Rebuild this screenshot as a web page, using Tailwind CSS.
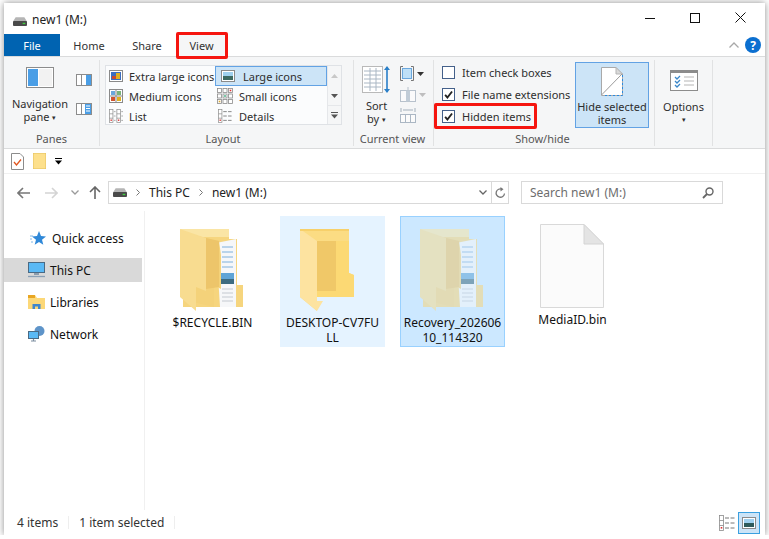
<!DOCTYPE html>
<html><head><meta charset="utf-8">
<script src="https://cdn.jsdelivr.net/npm/@tailwindcss/browser@4"></script>
</head>
<body class="bg-white overflow-hidden font-['Noto_Sans','Open_Sans',sans-serif] text-[11px] leading-[13px] text-[#2b2b2b]">
<svg width="0" height="0" class="absolute">
<defs>
<symbol id="drive" viewBox="0 0 16 10"><path d="M3 0h10l3 5H0z" fill="#b5b5b5"/><rect x="0" y="4.5" width="16" height="5.5" rx="1" fill="#4a4a4a"/><rect x="11" y="6.5" width="3" height="1.5" fill="#3fd13f"/></symbol>
<symbol id="folderfull" viewBox="0 0 63 82">
<path d="M3 2 H49 V10 H57 V56 H63 V78 H3z" fill="#f6d57e"/>
<path d="M0 0 H49 V8 L3 8z" fill="#fae5a5"/>
<path d="M36 14 L56 10 V78 H40z" fill="#f6f7f9"/>
<g stroke="#7fb0dc" stroke-width="1"><path d="M42 18h11M42 23h11M42 28h11M42 33h11M42 38h11"/></g>
<rect x="41" y="44" width="13" height="9" fill="#5fa4d6"/><rect x="41" y="50" width="13" height="5" fill="#3d6b80"/>
<g stroke="#c4c9d0" stroke-width="1"><path d="M42 60h11M42 64h11M42 68h11M42 72h11"/></g>
<path d="M9 5 L39 12 L41 26 V60 L34 56 V78 L9 72z" fill="#f4d27a"/>
<path d="M0 0 L26 9 V62 L16 58 V82 L0 68z" fill="#f8dc90"/>
<path d="M9 5 L39 12 V58 L26 60 V9z" fill="#edc56a"/>
</symbol>
<symbol id="folderopen" viewBox="0 0 54 82">
<path d="M0 0 H49 V44 L54 46 V68 H17 V82 L0 68z" fill="#fbdc83"/>
<path d="M17 12 H49 V44 L54 46 V68 H17z" fill="#fcd974"/>
<path d="M0 0 L17 12 V72 H23 L17 82 L0 68z" fill="#fde3a0"/>
<path d="M0 0 H49 V2 H0z" fill="#f7d06a"/>
<path d="M17 12 H36 V62 H17z" fill="#ecc264" opacity=".75"/>
</symbol>
<symbol id="chk" viewBox="0 0 13 13"><path d="M2.5 7 L5.2 10 L10.7 3" fill="none" stroke="#222" stroke-width="2.2"/></symbol>
<symbol id="grid" viewBox="0 0 16 16"><g fill="#fff" stroke="#8a8a8a" stroke-width=".8"><rect x=".5" y=".5" width="4" height="4"/><rect x="6" y=".5" width="4" height="4"/><rect x="11.5" y=".5" width="4" height="4"/><rect x=".5" y="6" width="4" height="4"/><rect x="6" y="6" width="4" height="4"/><rect x="11.5" y="6" width="4" height="4"/><rect x=".5" y="11.5" width="4" height="4"/><rect x="6" y="11.5" width="4" height="4"/><rect x="11.5" y="11.5" width="4" height="4"/></g><rect x="12.7" y="1.7" width="1.6" height="1.6" fill="#d33"/><rect x="7.2" y="7.2" width="1.6" height="1.6" fill="#3a7"/><rect x="1.7" y="12.7" width="1.6" height="1.6" fill="#da3"/></symbol>
<symbol id="detail" viewBox="0 0 16 16"><g fill="#fff" stroke="#8a8a8a" stroke-width=".8"><rect x=".5" y=".5" width="4" height="15"/></g><path d="M.5 5.5h4M.5 10.5h4" stroke="#8a8a8a" stroke-width=".8"/><rect x="1.7" y="12" width="1.6" height="1.6" fill="#d33"/><path d="M6 3h4M11.5 3h4M6 8h4M11.5 8h4M6 13h4M11.5 13h4" stroke="#777" stroke-width="1"/></symbol>
<symbol id="list" viewBox="0 0 16 16"><g fill="#fff" stroke="#8a8a8a" stroke-width=".8"><rect x=".5" y=".5" width="4" height="15"/><rect x="9" y=".5" width="4" height="15"/></g><path d="M.5 5.5h4M.5 10.5h4M9 5.5h4M9 10.5h4M5.5 3h2M5.5 8h2M5.5 13h2M14 3h2M14 8h2M14 13h2" stroke="#8a8a8a" stroke-width=".8"/><rect x="1.7" y="12" width="1.6" height="1.6" fill="#d33"/><rect x="10.2" y="12" width="1.6" height="1.6" fill="#d33"/></symbol>
</defs>
</svg>

<div class="relative ml-[4px] mt-[3px] w-[761px] h-[532px] bg-white shadow-[0_0_7px_rgba(0,0,0,0.45)] flex flex-col overflow-hidden">

  <!-- title bar -->
  <div class="h-[31px] shrink-0 flex items-center relative">
    <svg class="ml-[9px] w-[14px] h-[9px] mt-[5px]"><use href="#drive"/></svg>
    <span class="ml-[5px] mt-[1px] text-[12px] text-[#222]">new1 (M:)</span>
    <div class="ml-auto flex items-center mt-[-2px] mr-[19px] gap-[35px]">
      <svg width="10" height="10"><path d="M0 5.5h10" stroke="#111" stroke-width="1"/></svg>
      <svg width="10" height="10"><rect x=".5" y=".5" width="9" height="9" fill="none" stroke="#111"/></svg>
      <svg width="11" height="11"><path d="M.5.5l10 10M10.5.5l-10 10" stroke="#111"/></svg>
    </div>
  </div>

  <!-- tabs -->
  <div class="h-[23px] shrink-0 flex items-stretch relative border-b border-[#dadbdc] text-[#333]">
    <div class="w-[56px] bg-[#0063b1] text-white flex items-center justify-center">File</div>
    <div class="w-[58px] flex items-center justify-center">Home</div>
    <div class="w-[58px] flex items-center justify-center">Share</div>
    <div class="w-[51px] flex items-center justify-center bg-[#f5f6f7] mb-[-1px]">View</div>
    <div class="ml-auto flex items-center mr-[4px] gap-[6px]">
      <svg width="10" height="6"><path d="M.5 5.5L5 1l4.5 4.5" fill="none" stroke="#a8a8a8" stroke-width="1.3"/></svg>
      <div class="w-[16px] h-[16px] rounded-full bg-[#0b6fd0] text-white flex items-center justify-center text-[12px] font-bold">?</div>
    </div>
  </div>

  <!-- ribbon -->
  <div class="h-[92px] shrink-0 flex bg-[#f5f6f7] border-b border-[#dadbdc] text-[#2e2e2e] pt-[3px] pb-[2px]">
    <!-- panes -->
    <div class="w-[96px] border-r border-[#e1e2e3] flex flex-col">
      <div class="flex-1 flex">
        <div class="w-[72px] flex flex-col items-center pl-[0px] pt-[7px]">
          <svg width="28" height="21"><rect x=".5" y=".5" width="27" height="20" fill="#fff" stroke="#8c8c8c"/><rect x="2" y="2" width="10" height="17" fill="#4a9ee6"/><rect x="13" y="2" width="13" height="17" fill="#f2f2f2"/></svg>
          <div class="text-center mt-[9px]">Navigation<br>pane <span class="text-[7px] align-[1px]">▾</span></div>
        </div>
        <div class="flex flex-col gap-[13px] pt-[12px]">
          <svg width="16" height="16"><rect x=".5" y="2.5" width="15" height="11" fill="#fff" stroke="#8c8c8c"/><path d="M5.5 3v10" stroke="#8c8c8c"/><rect x="10" y="3" width="5" height="10" fill="#4a9ee6"/></svg>
          <svg width="16" height="16"><rect x=".5" y="2.5" width="15" height="11" fill="#fff" stroke="#8c8c8c"/><path d="M5.5 3v10" stroke="#8c8c8c"/><rect x="9" y="3" width="6" height="10" fill="#4a9ee6"/><path d="M10 5h4M10 7.5h4M10 10h4" stroke="#fff"/></svg>
        </div>
      </div>
      <div class="text-center text-[#555] h-[14px]">Panes</div>
    </div>
    <!-- layout -->
    <div class="w-[254px] border-r border-[#e1e2e3] flex flex-col">
      <div class="flex-1">
        <div class="ml-[5px] mt-[5px] w-[237px] h-[60px] flex border border-[#dfe2e6] bg-[#fbfcfd]">
          <div class="w-[221px] grid grid-cols-[110px_111px] grid-rows-[20px_20px_20px] text-[#2e2e2e]">
            <div class="flex items-center pl-[3px] gap-[6px]"><svg width="14" height="12"><rect x=".5" y=".5" width="13" height="11" fill="#fff" stroke="#8a8a8a"/><rect x="2" y="2" width="10" height="8" fill="#3b6ec0"/><rect x="7" y="3" width="4" height="6" fill="#e0b020"/><rect x="3" y="6" width="4" height="3" fill="#c84a30"/></svg>Extra large icons</div>
            <div class="flex items-center pl-[5px] gap-[8px] bg-[#cce4f7] border border-[#62a2e4] ml-[-1px]"><svg width="14" height="12"><rect x=".5" y=".5" width="13" height="11" fill="#fff" stroke="#8a8a8a"/><rect x="2" y="2" width="10" height="4" fill="#9fd0ee"/><rect x="2" y="6" width="10" height="4" fill="#3d6a62"/></svg>Large icons</div>
            <div class="flex items-center pl-[3px] gap-[6px]"><svg width="14" height="14"><rect x=".5" y=".5" width="13" height="13" fill="#fff" stroke="#8a8a8a"/><path d="M7 1v12M1 7h12" stroke="#8a8a8a"/><rect x="2" y="2" width="4" height="4" fill="#6aa7dd"/><rect x="8" y="2" width="4" height="4" fill="#7ab37a"/><rect x="2" y="8" width="4" height="4" fill="#d0532f"/><rect x="8" y="8" width="4" height="4" fill="#e0b020"/></svg>Medium icons</div>
            <div class="flex items-center pl-[1px] gap-[6px]"><svg width="16" height="16"><use href="#grid"/></svg>Small icons</div>
            <div class="flex items-center pl-[3px] gap-[6px]"><svg width="14" height="14"><use href="#list"/></svg>List</div>
            <div class="flex items-center pl-[1px] gap-[6px]"><svg width="16" height="14"><use href="#detail"/></svg>Details</div>
          </div>
          <div class="w-[14px] border-l border-[#e5e7ea] ml-auto flex flex-col items-center bg-[#f5f6f7]">
            <div class="h-[20px] flex items-center"><svg width="7" height="4"><path d="M3.5 0L7 4H0z" fill="#c8c8c8"/></svg></div>
            <div class="h-[20px] flex items-center border-b border-[#e5e7ea] w-full justify-center"><svg width="7" height="4"><path d="M3.5 4L7 0H0z" fill="#555"/></svg></div>
            <div class="h-[18px] flex items-center"><svg width="7" height="7"><path d="M0 .5h7" stroke="#555"/><path d="M3.5 6.5L7 2.5H0z" fill="#555"/></svg></div>
          </div>
        </div>
      </div>
      <div class="text-center text-[#555] h-[14px] pr-[7px]">Layout</div>
    </div>
    <!-- current view -->
    <div class="w-[80px] border-r border-[#e1e2e3] flex flex-col">
      <div class="flex-1 flex">
        <div class="w-[44px] flex flex-col items-center pt-[5px] pl-[1px]">
          <svg width="29" height="29"><rect x=".5" y="1.5" width="20" height="26" fill="#fff" stroke="#b9b9b9"/><g stroke="#aab7c4"><path d="M2 6h17M2 10h17M2 14h17M2 18h17M2 22h17M8 3v23M14 3v23"/></g><path d="M25 2v25" stroke="#2a7fc8" stroke-width="1.6"/><path d="M22 5l3-4 3 4zM22 24l3 4 3-4z" fill="#2a7fc8"/></svg>
          <div class="text-center mt-[5px]">Sort<br>by <span class="text-[7px] align-[1px]">▾</span></div>
        </div>
        <div class="flex flex-col gap-[6px] pt-[6px] pl-[2px]">
          <div class="flex items-center gap-[3px]"><svg width="14" height="15"><path d="M3 .5H.5v14H3M11 .5h2.500v14H11" fill="none" stroke="#777"/><rect x="2.500" y="2.500" width="9" height="10" fill="#bfe0f7" stroke="#6aa7dd"/></svg><svg width="7" height="4"><path d="M0 0h7L3.500 4z" fill="#333"/></svg></div>
          <div class="flex items-center gap-[3px] opacity-50"><svg width="16" height="15"><rect x=".5" y="3.500" width="15" height="11" fill="#fff" stroke="#7a8ea3"/><rect x="6" y="3.500" width="4" height="11" fill="#8fa4b8"/><path d="M8 0v3" stroke="#7a8ea3"/></svg><svg width="7" height="4"><path d="M0 0h7L3.500 4z" fill="#888"/></svg></div>
          <svg width="16" height="16" class="opacity-60"><path d="M1 0v4M15 0v4M3 2h10" stroke="#6f8396"/><rect x=".5" y="6.500" width="15" height="8" fill="#fff" stroke="#7a8ea3"/><path d="M5.500 7v7M10.500 7v7" stroke="#7a8ea3"/></svg>
        </div>
      </div>
      <div class="text-center text-[#555] h-[14px] pr-[2px]">Current view</div>
    </div>
    <!-- show/hide -->
    <div class="w-[221px] border-r border-[#e1e2e3] flex flex-col">
      <div class="flex-1 flex">
        <div class="w-[140px] flex flex-col pl-[8px] pt-[6px] gap-[9px]">
          <label class="flex items-center gap-[7px] h-[13px]"><span class="w-[13px] h-[13px] border border-[#44608a] bg-white"></span>Item check boxes</label>
          <label class="flex items-center gap-[7px] h-[13px]"><svg width="13" height="13" class="border border-[#44608a] bg-white"><use href="#chk"/></svg>File name extensions</label>
          <label class="flex items-center gap-[7px] h-[13px]"><svg width="13" height="13" class="border border-[#44608a] bg-white"><use href="#chk"/></svg>Hidden items</label>
        </div>
        <div class="ml-[1px] mt-[2px] w-[74px] h-[66px] bg-[#cce4f7] border border-[#62a2e4] flex flex-col items-center pt-[4px]">
          <svg width="22" height="29"><path d="M.5.5H15L21.500 7V28.500H.5z" fill="#fff" stroke="#a9a9a9"/><path d="M15 .5V7h6.500z" fill="#d9d9d9" stroke="#b5b5b5"/><path d="M.5 28L21 7" stroke="#9a9a9a"/><path d="M21.500 8V28.500H3" fill="none" stroke="#2a8be0" stroke-dasharray="2 2"/></svg>
          <div class="text-center mt-[4px]">Hide selected<br>items</div>
        </div>
      </div>
      <div class="text-center text-[#555] h-[14px] pr-[3px]">Show/hide</div>
    </div>
    <!-- options -->
    <div class="w-[58px] border-r border-[#e1e2e3] flex flex-col items-center pt-[10px]">
      <svg width="28" height="21"><rect x=".5" y=".5" width="27" height="20" fill="#fff" stroke="#8c8c8c"/><rect x="1" y="1" width="26" height="2" fill="#8c8c8c"/><path d="M14 7h10M14 11h10M14 15h10" stroke="#b5b5b5"/><path d="M5 7l2 2 3-3M5 11l2 2 3-3M5 15l2 2 3-3" fill="none" stroke="#3a87c9" stroke-width="1.300"/></svg>
      <div class="mt-[9px]">Options</div>
      <div class="text-[7px] leading-[13px]">▾</div>
    </div>
  </div>

  <!-- quick access -->
  <div class="h-[25px] shrink-0 flex items-center pl-[7px] border-b border-[#f0f0f0]">
    <svg width="13" height="17"><path d="M.5.5H9L12.500 4V16.500H.5z" fill="#fff" stroke="#8c8c8c"/><path d="M3 9l2.500 3L10 6.500" fill="none" stroke="#e0561f" stroke-width="1.300"/></svg>
    <svg width="13" height="16" class="ml-[9px]"><path d="M0 0H13V16H0z" fill="#fde08c" stroke="#e4c05c"/></svg>
    <svg width="7" height="7" class="ml-[9px]"><path d="M0 .5h7" stroke="#000"/><path d="M3.500 6.500L7 2.500H0z" fill="#000"/></svg>
  </div>

  <!-- nav -->
  <div class="h-[37px] shrink-0 flex items-center">
    <svg width="13" height="12" class="ml-[13px]"><path d="M6 1L1 6l5 5M1 6h12" fill="none" stroke="#777" stroke-width="1.600"/></svg>
    <svg width="13" height="12" class="ml-[15px]"><path d="M7 1l5 5-5 5M12 6H0" fill="none" stroke="#d4d4d4" stroke-width="1.600"/></svg>
    <svg width="8" height="5" class="ml-[13px]"><path d="M.5.5L4 4 7.500.5" fill="none" stroke="#9a9a9a" stroke-width="1.300"/></svg>
    <svg width="12" height="13" class="ml-[10px]"><path d="M1 6l5-5 5 5M6 1v12" fill="none" stroke="#666" stroke-width="1.600"/></svg>
    <div class="ml-[7px] w-[401px] h-[23px] border border-[#d9d9d9] flex items-center text-[12px] text-[#222]">
      <svg class="ml-[4px] w-[14px] h-[9px]"><use href="#drive"/></svg>
      <svg width="4" height="7" class="ml-[9px]"><path d="M.5.5l3 3-3 3" fill="none" stroke="#777"/></svg>
      <span class="ml-[9px]">This PC</span>
      <svg width="4" height="7" class="ml-[9px]"><path d="M.5.5l3 3-3 3" fill="none" stroke="#777"/></svg>
      <span class="ml-[9px]">new1 (M:)</span>
      <svg width="8" height="5" class="ml-auto mr-[4px]"><path d="M.5.5L4 4 7.500.5" fill="none" stroke="#666" stroke-width="1.300"/></svg>
      <div class="w-[17px] h-full border-l border-[#d9d9d9] flex items-center justify-center"><svg width="11" height="12"><path d="M9.500 6.500A4.200 4.200 0 1 1 7 2.200" fill="none" stroke="#777" stroke-width="1.300"/><path d="M5.500 0L8.500 2.200 5.500 4.500z" fill="#777"/></svg></div>
    </div>
    <div class="ml-[12px] w-[202px] h-[23px] border border-[#d9d9d9] flex items-center pl-[8px] text-[#6d6d6d] text-[12px]">
      Search new1 (M:)
      <svg width="12" height="12" class="ml-auto mr-[8px]"><circle cx="7.500" cy="4.500" r="3.500" fill="none" stroke="#666" stroke-width="1.400"/><path d="M5 7L1 11" stroke="#666" stroke-width="1.800"/></svg>
    </div>
  </div>

  <!-- main -->
  <div class="flex-1 flex min-h-0">
    <div class="w-[141px] border-r border-[#f0f0f0] pt-[15px] flex flex-col gap-[8px] text-[12px] text-[#111]">
      <div class="h-[24px] w-[138px] flex items-center pl-[26px] gap-[5px]">
        <svg width="17" height="16"><path d="M9 1l2 5 5 .4-4 3.300 1.300 5L9 12l-4.300 2.700 1.300-5L2 6.400 7 6z" fill="#2f88d8"/><path d="M0 6h3M0 9h2M1 12h2" stroke="#7fb6e6"/></svg>Quick access
      </div>
      <div class="h-[24px] w-[138px] flex items-center pl-[24px] gap-[5px] bg-[#d9d9d9]">
        <svg width="17" height="16"><rect x=".5" y=".5" width="16" height="10" fill="#5ab9f5" stroke="#4a6a84"/><path d="M6 11h5v2H6z" fill="#8a9cad"/><path d="M0 14.500h17" stroke="#8aa0b5" stroke-width="1.300"/></svg>This PC
      </div>
      <div class="h-[24px] w-[138px] flex items-center pl-[24px] gap-[5px]">
        <svg width="17" height="16"><path d="M0 1h7l2 3h8v11H0z" fill="#fcd878"/><path d="M0 1h7v3H0z" fill="#e8a623"/><path d="M4.500 15v-5h8v5h-2.500v-2.500H7V15z" fill="#3f86cc"/></svg>Libraries
      </div>
      <div class="h-[24px] w-[138px] flex items-center pl-[24px] gap-[5px]">
        <svg width="17" height="16"><circle cx="11.500" cy="5" r="5" fill="#5e94c9"/><rect x=".5" y="5.500" width="10" height="7" fill="#5ab9f5" stroke="#4a6a84"/><path d="M3 15h5M5.500 13v2" stroke="#7c8ea0" stroke-width="1.200"/></svg>Network
      </div>
    </div>
    <div class="flex-1 pl-[15px] pt-[5px] flex items-start gap-[15px] text-[12px] leading-[15px] text-[#111] text-center">
      <div class="w-[105px] h-[131px] pt-[12px] flex flex-col items-center border border-transparent">
        <svg width="63" height="82" class="mr-[2px]"><use href="#folderfull"/></svg>
        <div class="mt-[4px]">$RECYCLE.BIN</div>
      </div>
      <div class="w-[105px] h-[131px] pt-[12px] flex flex-col items-center bg-[#e5f3ff] border border-[#e5f3ff]">
        <svg width="54" height="82" class="mr-[11px]"><use href="#folderopen"/></svg>
        <div class="mt-[4px]">DESKTOP-CV7FU<br>LL</div>
      </div>
      <div class="w-[105px] h-[131px] pt-[12px] flex flex-col items-center bg-[#cce8ff] border border-[#99d1ff]">
        <svg width="63" height="82" class="mr-[2px] opacity-55"><use href="#folderfull"/></svg>
        <div class="mt-[4px]">Recovery_202606<br>10_114320</div>
      </div>
      <div class="w-[105px] h-[131px] pt-[7px] flex flex-col items-center border border-transparent">
        <svg width="64" height="84" class="mr-[2px]"><path d="M.5.5H44L63.500 20V83.500H.5z" fill="#fbfbfb" stroke="#d9d9d9"/><path d="M44 .5V20H63.500z" fill="#e4e4e4" stroke="#d4d4d4"/></svg>
        <div class="mt-[4px]">MediaID.bin</div>
      </div>
    </div>
  </div>

  <!-- status -->
  <div class="h-[25px] shrink-0 flex items-center text-[#333] text-[12px]">
    <span class="ml-[13px] pr-[10px] border-r border-[#eeeeee]">4 items</span>
    <span class="ml-[10px] pr-[10px] border-r border-[#eeeeee]">1 item selected</span>
    <div class="ml-auto flex items-center mr-[5px] gap-[2px]">
      <svg width="18" height="16"><use href="#detail"/></svg>
      <div class="w-[22px] h-[22px] bg-[#cce4f7] border border-[#3aa0e0] flex items-center justify-center"><svg width="14" height="12"><rect x=".5" y=".5" width="13" height="11" fill="#fff" stroke="#8a8a8a"/><rect x="2" y="2" width="10" height="4" fill="#9fd0ee"/><rect x="2" y="6" width="10" height="4" fill="#2e5a5a"/></svg></div>
    </div>
  </div>

  <!-- red annotations -->
  <div class="absolute left-[172px] top-[29px] w-[52px] h-[27px] border-[3px] border-[#f5150f] rounded-[2px]"></div>
  <div class="absolute left-[430px] top-[100px] w-[103px] h-[26px] border-[3px] border-[#f5150f] rounded-[2px]"></div>
</div>
</body></html>
